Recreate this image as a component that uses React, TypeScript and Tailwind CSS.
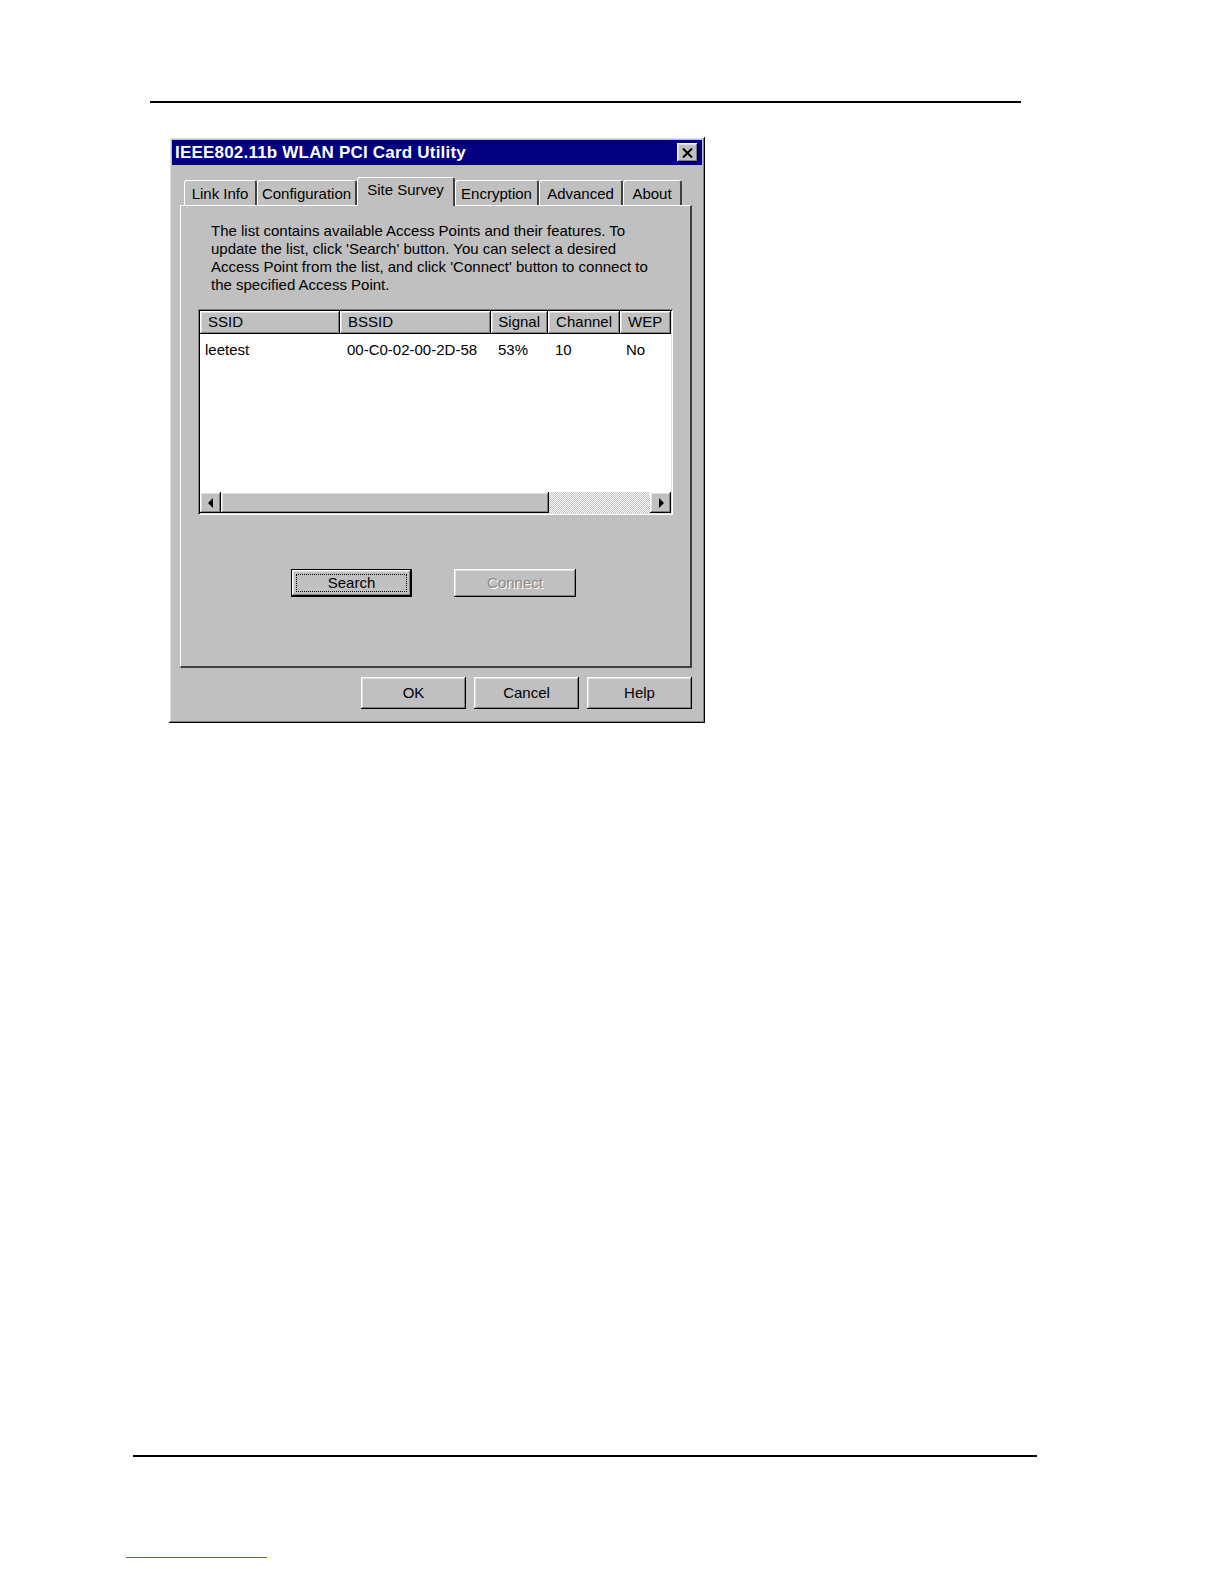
import React from "react";

const raised =
  "shadow-[inset_-1px_-1px_0_#000,inset_1px_1px_0_#fff,inset_-2px_-2px_0_#808080,inset_2px_2px_0_#dfdfdf]";
const sunken =
  "shadow-[inset_1px_1px_0_#808080,inset_-1px_-1px_0_#fff,inset_2px_2px_0_#000,inset_-2px_-2px_0_#dfdfdf]";

function Tab({ label, w, selected }: { label: string; w: number; selected?: boolean }) {
  return (
    <div
      className={
        "relative flex items-center justify-center rounded-t-[3px] border-t border-l border-r-2 border-t-white border-l-white border-r-[#404040] bg-[#c0c0c0] " +
        (selected ? "z-10 h-[29px] -mb-[1px] pb-[4px]" : "h-[25px] pt-[2px]")
      }
      style={{ width: w }}
    >
      {label}
    </div>
  );
}

function HeaderCell({ label, w, right }: { label: string; w: number; right?: boolean }) {
  return (
    <div
      className={
        "flex h-[23px] items-center bg-[#c0c0c0] px-[8px] " +
        raised +
        (right ? " justify-end" : "")
      }
      style={{ width: w }}
    >
      {label}
    </div>
  );
}

function Arrow({ dir }: { dir: "left" | "right" }) {
  return (
    <div className={"flex h-[21px] w-[21px] items-center justify-center bg-[#c0c0c0] " + raised}>
      <svg width="6" height="10" viewBox="0 0 6 10">
        {dir === "left" ? <polygon points="5,0 5,10 0,5" fill="#000" /> : <polygon points="1,0 1,10 6,5" fill="#000" />}
      </svg>
    </div>
  );
}

export default function App() {
  return (
    <div className="relative h-[1584px] w-[1224px] bg-white font-['Liberation_Sans',Arial,sans-serif] text-[15px] text-black">
      <div className="h-[101px]" />
      <div className="ml-[150px] h-[2px] w-[871px] bg-black" />
      <div className="h-[34px]" />

      {/* Dialog */}
      <div className={"ml-[169px] flex h-[586px] w-[536px] flex-col bg-[#c0c0c0] p-[3px] " + raised}>
        {/* Title bar */}
        <div className="flex h-[25px] items-center justify-between bg-[#000080] pl-[3px] pr-[4px]">
          <span className="text-[17px] font-bold tracking-[0.2px] text-white">IEEE802.11b WLAN PCI Card Utility</span>
          <div className={"flex h-[19px] w-[21px] items-center justify-center bg-[#c0c0c0] " + raised}>
            <svg width="11" height="10" viewBox="0 0 11 10">
              <path d="M1 0.5 L10 9.5 M10 0.5 L1 9.5" stroke="#000" strokeWidth="2" />
            </svg>
          </div>
        </div>

        {/* Tabs */}
        <div className="ml-[8px] mt-[12px] flex items-end pl-[4px]">
          <Tab label="Link Info" w={73} />
          <Tab label="Configuration" w={100} />
          <Tab label="Site Survey" w={98} selected />
          <Tab label="Encryption" w={84} />
          <Tab label="Advanced" w={84} />
          <Tab label="About" w={59} />
        </div>

        {/* Panel */}
        <div className="ml-[8px] flex h-[463px] w-[512px] flex-col border-t border-l border-r-2 border-b-2 border-t-white border-l-white border-r-[#404040] border-b-[#404040] bg-[#c0c0c0]">
          <p className="ml-[30px] mt-[16px] w-[470px] leading-[18px]">
            The list contains available Access Points and their features. To
            <br />
            update the list, click 'Search' button. You can select a desired
            <br />
            Access Point from the list, and click 'Connect' button to connect to
            <br />
            the specified Access Point.
          </p>

          {/* List */}
          <div className={"ml-[17px] mt-[15px] flex h-[206px] w-[475px] flex-col bg-white p-[2px] " + sunken}>
            <div className="flex">
              <HeaderCell label="SSID" w={140} />
              <HeaderCell label="BSSID" w={151} />
              <HeaderCell label="Signal" w={57} right />
              <HeaderCell label="Channel" w={72} right />
              <HeaderCell label="WEP" w={51} />
            </div>
            <div className="flex h-[30px] items-center pt-[2px]">
              <span className="w-[147px] pl-[5px]">leetest</span>
              <span className="w-[151px]">00-C0-02-00-2D-58</span>
              <span className="w-[57px]">53%</span>
              <span className="w-[71px]">10</span>
              <span>No</span>
            </div>
            <div className="flex-1" />
            <div className="flex h-[21px]">
              <Arrow dir="left" />
              <div className={"h-[21px] w-[328px] bg-[#c0c0c0] " + raised} />
              <div className="h-[21px] flex-1 bg-[repeating-conic-gradient(#ffffff_0_25%,#c0c0c0_0_50%)] bg-[length:2px_2px]" />
              <Arrow dir="right" />
            </div>
          </div>

          {/* Search / Connect */}
          <div className="ml-[110px] mt-[54px] flex gap-[42px]">
            <div className="h-[28px] w-[121px] border border-black">
              <div className={"flex h-full w-full items-center justify-center bg-[#c0c0c0] p-[4px] " + raised}>
                <div className="flex h-full w-full items-center justify-center border border-dotted border-black">
                  Search
                </div>
              </div>
            </div>
            <div className={"flex h-[28px] w-[122px] items-center justify-center bg-[#c0c0c0] text-[#8a8a8a] [text-shadow:1px_1px_0_#fff] " + raised}>
              Connect
            </div>
          </div>
        </div>

        {/* Bottom buttons */}
        <div className="mt-[9px] flex gap-[8px] pl-[189px]">
          <div className={"flex h-[32px] w-[105px] items-center justify-center bg-[#c0c0c0] " + raised}>OK</div>
          <div className={"flex h-[32px] w-[105px] items-center justify-center bg-[#c0c0c0] " + raised}>Cancel</div>
          <div className={"flex h-[32px] w-[105px] items-center justify-center bg-[#c0c0c0] " + raised}>Help</div>
        </div>
      </div>

      <div className="h-[732px]" />
      <div className="ml-[133px] h-[2px] w-[904px] bg-black" />
      <div className="h-[100px]" />
      <div className="ml-[126px] h-[1px] w-[141px] bg-[#4a5ad0]" />
    </div>
  );
}
